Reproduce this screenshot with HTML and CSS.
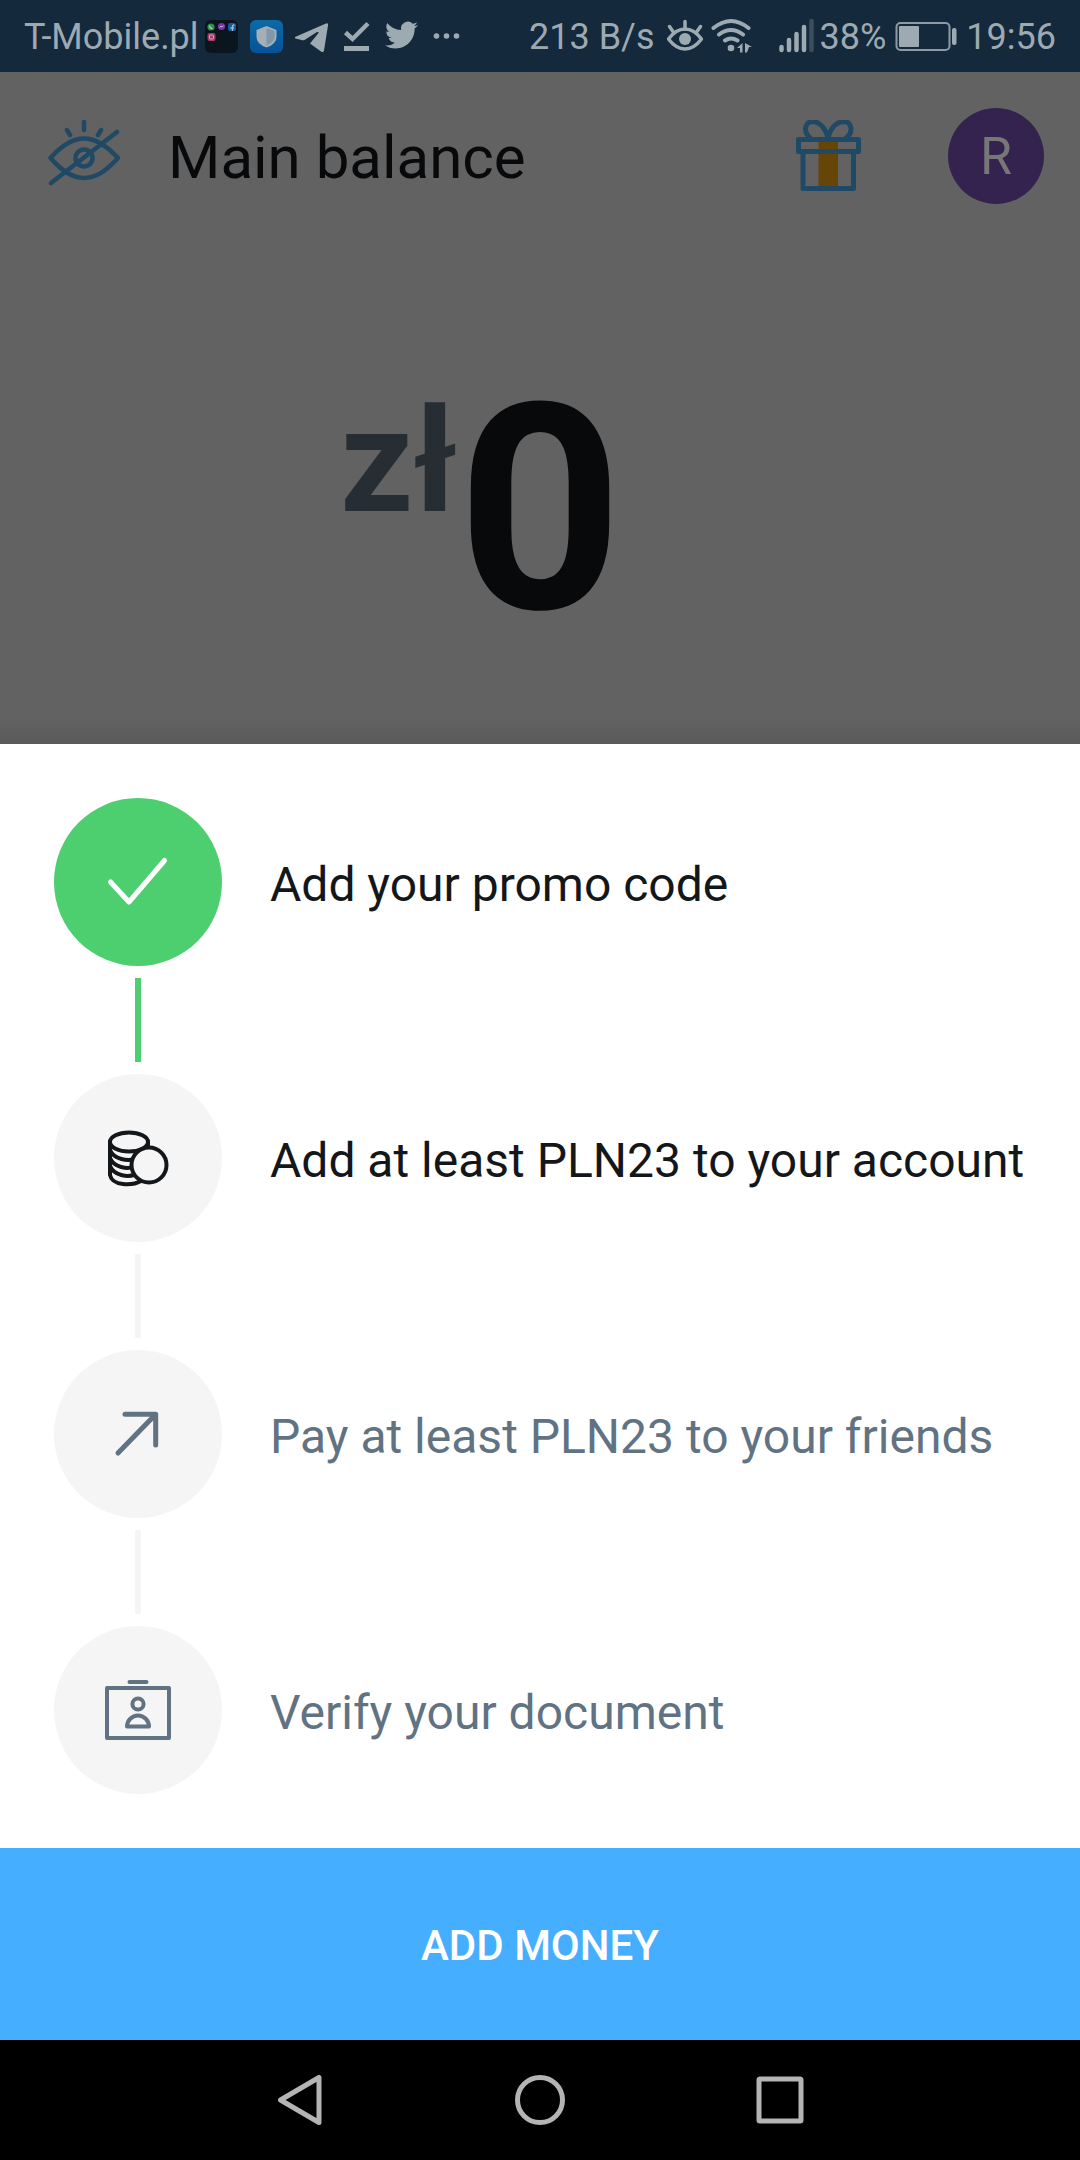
FILE: index.html
```html
<!DOCTYPE html>
<html lang="en">
<head>
    <meta charset="UTF-8">
    <meta name="viewport" content="width=device-width, initial-scale=1.0">
    <title>Main balance</title>
    <link rel="stylesheet" href="styles.css">
</head>
<body>
    <div class="status-bar">
        <span>T-Mobile.pl</span>
        <div class="notifications">
            <svg viewBox="0 0 33 33">
                <rect width="33" height="33" rx="6" fill="#0a151e"/>
                <circle cx="6" cy="7" r="3.6" fill="#2f8f4c"/>
                <path d="M4.5 5.5q0 3 3 3.2" stroke="#b5c5bb" stroke-width="1.2" fill="none"/>
                <circle cx="16.5" cy="6.5" r="3.6" fill="#7a35a8"/>
                <path d="M14.5 7.5l1.5-1.5 1.2 1 1.5-1.5" stroke="#c5b5cc" fill="none"/>
                <rect x="23" y="3" width="8" height="8" rx="2" fill="#145a9c"/>
                <path d="M27.5 11V6.5q0-1.5 2-1.5M25.5 8h3.5" stroke="#a9b8c6" stroke-width="1.3" fill="none"/>
                <rect x="2.5" y="13" width="8" height="8" rx="2" fill="#a63a6a"/>
                <rect x="4.5" y="15" width="4" height="4" rx="1" stroke="#c9b0ac" fill="none"/>
            </svg>
            <svg viewBox="0 0 33 33">
                <defs>
                    <linearGradient id="shield" x1="0" y1="0" x2="0" y2="1">
                        <stop offset="0" stop-color="#0c6aa6"/>
                        <stop offset="1" stop-color="#07529a"/>
                    </linearGradient>
                </defs>
                <rect width="33" height="33" rx="6" fill="url(#shield)"/>
                <path d="M16.5 6l10 4v7q0 7-10 10.500Q6.500 24 6.500 17v-7z" fill="#a5afb6"/>
                <path d="M16.5 8l8 3v6q0 5-8 8.500z" fill="#8098aa"/>
            </svg>
            <svg viewBox="0 0 33 33" fill="#9eaab2">
                <path d="M0 17L31 3.500Q33.500 2.500 33 5.500L29 30.500Q28.500 33 26 31.500L15 23.500L23.500 13Q24 11.500 22 12L9.500 20Q8 20.500 6.500 20L.5 18.500Q-1 18 0 17z"/>
            </svg>
            <svg viewBox="0 0 33 33" fill="none" stroke="#9eaab2">
                <path d="M5.5 12.5l7 6.500L28 3.500" stroke-width="4.5"/>
                <path d="M4 28.5h25" stroke-width="5"/>
            </svg>
            <svg viewBox="0 3 24 20" fill="#9eaab2">
                <path d="M23.95 4.57a10 10 0 0 1-2.82.77 4.96 4.96 0 0 0 2.16-2.72 9.9 9.9 0 0 1-3.12 1.19 4.92 4.92 0 0 0-8.39 4.48C7.69 8.1 4.07 6.13 1.64 3.16a4.82 4.82 0 0 0-.67 2.48c0 1.71.87 3.21 2.19 4.1a4.9 4.9 0 0 1-2.23-.62v.06a4.92 4.92 0 0 0 3.95 4.83 5 5 0 0 1-2.21.08 4.94 4.94 0 0 0 4.6 3.42A9.87 9.87 0 0 1 0 19.54a14 14 0 0 0 7.55 2.21c9.05 0 14-7.5 14-13.98 0-.21 0-.42-.02-.63a9.94 9.94 0 0 0 2.46-2.55z"/>
            </svg>
            <svg viewBox="0 0 33 33" fill="#9eaab2">
                <circle cx="6.5" cy="16" r="2.8"/>
                <circle cx="16.5" cy="16" r="2.8"/>
                <circle cx="26.5" cy="16" r="2.8"/>
            </svg>
        </div>
        <div class="system">
            <span>213 B/s</span>
            <svg class="eye" viewBox="666 20 36 34" fill="none" stroke="#9eaab2" stroke-width="3.5" stroke-linecap="round">
                <path d="M667.5 40Q675 30 684 30T700.5 40Q693 50 684 50T667.5 40z"/>
                <circle cx="684" cy="40" r="6" fill="#9eaab2" stroke="none"/>
                <path d="M684 22.5V30M668.5 27.5L672 32.5M699.5 27.5L696 32.5"/>
            </svg>
            <svg class="wifi" viewBox="711 18 42 36" fill="none" stroke="#9eaab2" stroke-width="4" stroke-linecap="round">
                <path d="M713.5 28Q731 14 748.5 28M719 34.5Q731 25.5 743 34.5M725 40.5Q731 36.5 737.5 40.5"/>
                <circle cx="731" cy="48" r="3.3" fill="#9eaab2" stroke="none"/>
                <path d="M737 48l5.500-5v9.500h-2.500v-4.500zM745 43l7 4h-3l-2 5.500h-2z" fill="#9eaab2" stroke="none"/>
            </svg>
            <svg class="signal" viewBox="779 18 36 36" fill="none" stroke="#9eaab2" stroke-width="4.5" stroke-linecap="round">
                <path d="M781.5 47v3M789 40v10M796.5 34v16M804 27v23"/>
                <path d="M811.5 21v29" stroke="#3b4e5e"/>
            </svg>
            <span>38%</span>
            <svg class="battery" viewBox="895 22 62 29">
                <rect x="896.5" y="23" width="53" height="27" rx="4" fill="none" stroke="#8d9ba5" stroke-width="2"/>
                <rect x="899" y="26" width="20" height="21" rx="1" fill="#9eaab2"/>
                <rect x="952" y="28" width="4.5" height="17" rx="2" fill="#9eaab2"/>
            </svg>
            <span>19:56</span>
        </div>
    </div>

    <main class="balance">
        <header class="top-bar">
            <button class="icon-button" aria-label="Hide balance">
                <svg viewBox="48 120 72 72" fill="none" stroke="#204966" stroke-width="4.5" stroke-linecap="round" stroke-linejoin="round">
                    <path d="M50.5 158C62 145 72 138.5 84 138.5S106 145 118 158C106 171 96 178 84 178S62 171 50.5 158z"/>
                    <circle cx="84" cy="158" r="8.5"/>
                    <path d="M51 183L117 132M84 122v8M67 130l3 5M101 130l-3 5"/>
                </svg>
            </button>
            <h1>Main balance</h1>
            <button class="icon-button" aria-label="Gifts">
                <svg viewBox="792 120 72 72" fill="none" stroke="#204966" stroke-width="5" stroke-linejoin="round">
                    <path d="M818.5 141h19.500v46h-19.500z" fill="#674507" stroke="none"/>
                    <path d="M798.5 139.5h60v12h-60zM803 152v36.500h50.500V152"/>
                    <path d="M828 138C825 126 818 121.5 812.5 121.5C804 122 803 133 811 138.5M828 138C831 126 838 121.5 844 121.5C852.5 122 853.5 133 845.5 138.5"/>
                </svg>
            </button>
            <button class="avatar">R</button>
        </header>
        <div class="amount">
            <span class="currency">zł</span>
            <span class="value">0</span>
        </div>
    </main>

    <section class="sheet">
        <ul class="steps">
            <li class="step done">
                <div class="step-icon">
                    <svg viewBox="102 846 72 72" stroke-width="5">
                        <path d="M110.5 882L129 902L164.5 860.5"/>
                    </svg>
                </div>
                <span>Add your promo code</span>
            </li>
            <li class="step current">
                <div class="step-icon">
                    <svg viewBox="102 1122 72 72" stroke-width="4">
                        <ellipse cx="129" cy="1142" rx="19" ry="9.5"/>
                        <path d="M110 1142V1175C112 1186 132 1186 141 1181M110 1150C114 1160 128 1161 135 1159M110 1158C114 1168 128 1169 133 1167M110 1166C114 1176 128 1177 134 1175M148 1142V1148"/>
                        <circle cx="149" cy="1165" r="17.5" fill="#f5f5f5"/>
                    </svg>
                </div>
                <span>Add at least PLN23 to your account</span>
            </li>
            <li class="step">
                <div class="step-icon">
                    <svg viewBox="102 1398 72 72" stroke-width="5">
                        <path d="M118 1453L155.5 1414.5M125 1414.2H155.7V1445"/>
                    </svg>
                </div>
                <span>Pay at least PLN23 to your friends</span>
            </li>
            <li class="step">
                <div class="step-icon">
                    <svg viewBox="102 1674 72 72" stroke-width="4">
                        <rect x="107" y="1688" width="62" height="50"/>
                        <path d="M129.5 1682h17M127 1726.5a11 11 0 0 1 22 0z"/>
                        <circle cx="138" cy="1704" r="5.6"/>
                    </svg>
                </div>
                <span>Verify your document</span>
            </li>
        </ul>
        <button class="add-money">ADD MONEY</button>
    </section>

    <nav class="nav-bar">
        <button aria-label="Back">
            <svg viewBox="275 2075 50 50"><path d="M280.5 2100L319 2077.5V2122.5z"/></svg>
        </button>
        <button aria-label="Home">
            <svg viewBox="515 2075 50 50"><circle cx="540" cy="2100" r="22.5"/></svg>
        </button>
        <button aria-label="Recent apps">
            <svg viewBox="755 2075 50 50"><rect x="759" y="2079" width="42" height="42" rx="1"/></svg>
        </button>
    </nav>
</body>
</html>
```
FILE: styles.css
```css
* {
    box-sizing: border-box;
}
body {
    font-family: Roboto, 'Liberation Sans', sans-serif;
    margin: 0;
    min-height: 100vh;
    display: flex;
    flex-direction: column;
    background-color: #626262;
}
button {
    font-family: inherit;
    border: none;
    padding: 0;
    background: none;
    cursor: pointer;
}
svg {
    display: block;
}

/* status bar */
.status-bar {
    display: flex;
    align-items: center;
    height: 72px;
    padding: 0 24px;
    background-color: #14293b;
    color: #9eaab2;
    font-size: 36px;
    line-height: 72px;
    white-space: nowrap;
}
.status-bar span {
    padding-top: 2px;
}
.notifications {
    display: flex;
    gap: 12px;
    margin-left: 6px;
}
.notifications svg {
    width: 33px;
    height: 33px;
}
.system {
    display: flex;
    align-items: center;
    margin-left: auto;
}
.eye {
    width: 36px;
    height: 34px;
    margin-left: 12px;
}
.wifi {
    width: 42px;
    height: 36px;
    margin-left: 8px;
}
.signal {
    width: 36px;
    height: 36px;
    margin: 0 5px 0 26px;
}
.battery {
    width: 62px;
    height: 29px;
    margin: 0 9px;
}

/* balance screen behind the sheet */
.balance {
    flex: 1;
    background: linear-gradient(to top, #5a5a5a, #626262 24px);
}
.top-bar {
    display: flex;
    align-items: center;
    height: 168px;
    padding: 0 36px 0 48px;
}
.top-bar h1 {
    flex: 1;
    margin: 0 0 0 48px;
    padding-top: 2px;
    font-size: 60px;
    font-weight: 400;
    color: #08090b;
}
.icon-button svg {
    width: 72px;
    height: 72px;
}
.avatar {
    width: 96px;
    height: 96px;
    margin-left: 84px;
    border-radius: 50%;
    background-color: #34224f;
    color: #777;
    font-size: 52px;
}
.amount {
    display: grid;
    grid-template-columns: 1fr auto 1fr;
    padding: 126px 0 84px;
    font-weight: 700;
}
.currency {
    justify-self: end;
    font-size: 144px;
    line-height: 192px;
    color: #262e34;
}
.value {
    font-size: 288px;
    line-height: 288px;
    color: #08090b;
}

/* bottom sheet */
.sheet {
    background-color: #fff;
}
.steps {
    list-style: none;
    margin: 0;
    padding: 54px;
    display: flex;
    flex-direction: column;
    gap: 108px;
}
.step {
    position: relative;
    display: flex;
    align-items: center;
    gap: 48px;
    font-size: 48px;
    color: #617382;
    white-space: nowrap;
}
.step span {
    padding-top: 4px;
}
.step-icon {
    flex: none;
    display: flex;
    align-items: center;
    justify-content: center;
    width: 168px;
    height: 168px;
    border-radius: 50%;
    background-color: #f5f5f5;
}
.step-icon svg {
    width: 72px;
    height: 72px;
    fill: none;
    stroke: #617382;
    stroke-linecap: round;
    stroke-linejoin: round;
}
/* connector to the next step */
.step:not(:last-child)::after {
    content: "";
    position: absolute;
    top: 180px;
    left: 81px;
    width: 6px;
    height: 84px;
    background-color: #f5f5f5;
}
.step.done,
.step.current {
    color: #14171a;
}
.done .step-icon,
.step.done::after {
    background-color: #4dcf70;
}
.done .step-icon svg {
    stroke: #fff;
}
.current .step-icon svg {
    stroke: #14171a;
}
.add-money {
    display: block;
    width: 100%;
    height: 192px;
    padding-top: 2px;
    background-color: #46aeff;
    color: #fff;
    font-size: 42px;
    font-weight: 500;
}

/* navigation bar */
.nav-bar {
    display: flex;
    justify-content: center;
    height: 120px;
    background-color: #000;
}
.nav-bar button {
    width: 240px;
}
.nav-bar svg {
    width: 50px;
    height: 50px;
    margin: 0 auto;
    fill: none;
    stroke: #b4b4b4;
    stroke-width: 5;
    stroke-linejoin: round;
}
```
